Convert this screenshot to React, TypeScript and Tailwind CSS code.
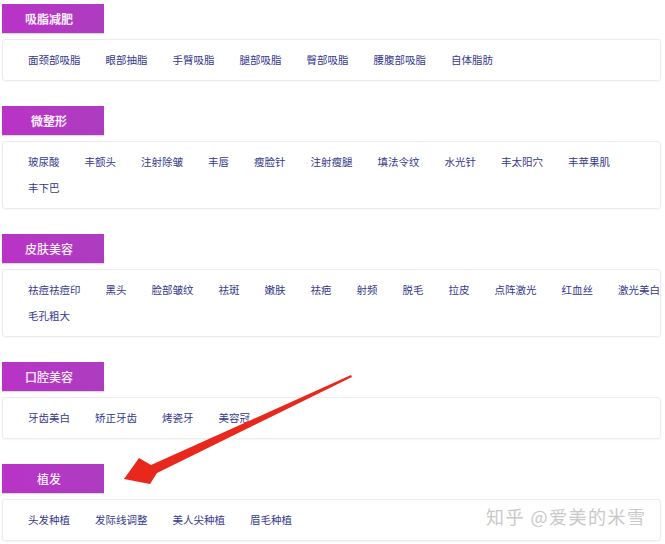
import React from "react";

const sections = [
  {
    title: "吸脂减肥",
    bold: true,
    rows: [["面颈部吸脂", "眼部抽脂", "手臂吸脂", "腿部吸脂", "臀部吸脂", "腰腹部吸脂", "自体脂肪"]],
  },
  {
    title: "微整形",
    bold: true,
    rows: [
      ["玻尿酸", "丰额头", "注射除皱", "丰唇", "瘦脸针", "注射瘦腿", "填法令纹", "水光针", "丰太阳穴", "丰苹果肌"],
      ["丰下巴"],
    ],
  },
  {
    title: "皮肤美容",
    bold: false,
    rows: [
      ["祛痘祛痘印", "黑头", "脸部皱纹", "祛斑", "嫩肤", "祛疤", "射频", "脱毛", "拉皮", "点阵激光", "红血丝", "激光美白"],
      ["毛孔粗大"],
    ],
  },
  {
    title: "口腔美容",
    bold: false,
    rows: [["牙齿美白", "矫正牙齿", "烤瓷牙", "美容冠"]],
  },
  {
    title: "植发",
    bold: false,
    rows: [["头发种植", "发际线调整", "美人尖种植", "眉毛种植"]],
  },
];

const font = { fontFamily: '"Noto Sans CJK SC", "Noto Sans", sans-serif' };

export default function App() {
  return (
    <div className="relative w-[665px] h-[544px] overflow-hidden bg-white" style={font}>
      <div className="flex flex-col gap-[25px] pt-[4px]">
        {sections.map((s) => (
          <div key={s.title} className="flex flex-col gap-[6px]">
            <div className="ml-[2px] w-[102px] h-[29px] flex items-center justify-center pr-[8px] bg-gradient-to-r from-[#b933c7] to-[#ad3cc0] text-[12px] text-[#fdf0ff] shadow-[0_1px_1px_rgba(0,0,0,0.15)]">
              <span className={s.bold ? "font-bold" : "font-medium"}>{s.title}</span>
            </div>
            <div className="ml-[2px] w-[659px] border border-[#ececec] rounded-[3px] py-[7px] pl-[25px] shadow-[0_1px_2px_rgba(0,0,0,0.04)]">
              {s.rows.map((row, i) => (
                <div key={i} className="flex gap-x-[25px] h-[26px] items-center whitespace-nowrap">
                  {row.map((item) => (
                    <span key={item} className="text-[10.5px] leading-[26px] text-[#35388c]">
                      {item}
                    </span>
                  ))}
                </div>
              ))}
            </div>
          </div>
        ))}
      </div>

      <svg className="absolute left-0 top-0 pointer-events-none" width="665" height="544">
        <polygon
          points="351,375 151,465 139,458 124,479 150,484 157,473 352,377"
          fill="#e8281c"
        />
      </svg>

      <div className="absolute left-[486px] top-[503px] text-[18px] leading-[26px] text-[#c9c9c9] tracking-[1.5px] [text-shadow:0_0_2px_#fff]">
        知乎 @爱美的米雪
      </div>
    </div>
  );
}
